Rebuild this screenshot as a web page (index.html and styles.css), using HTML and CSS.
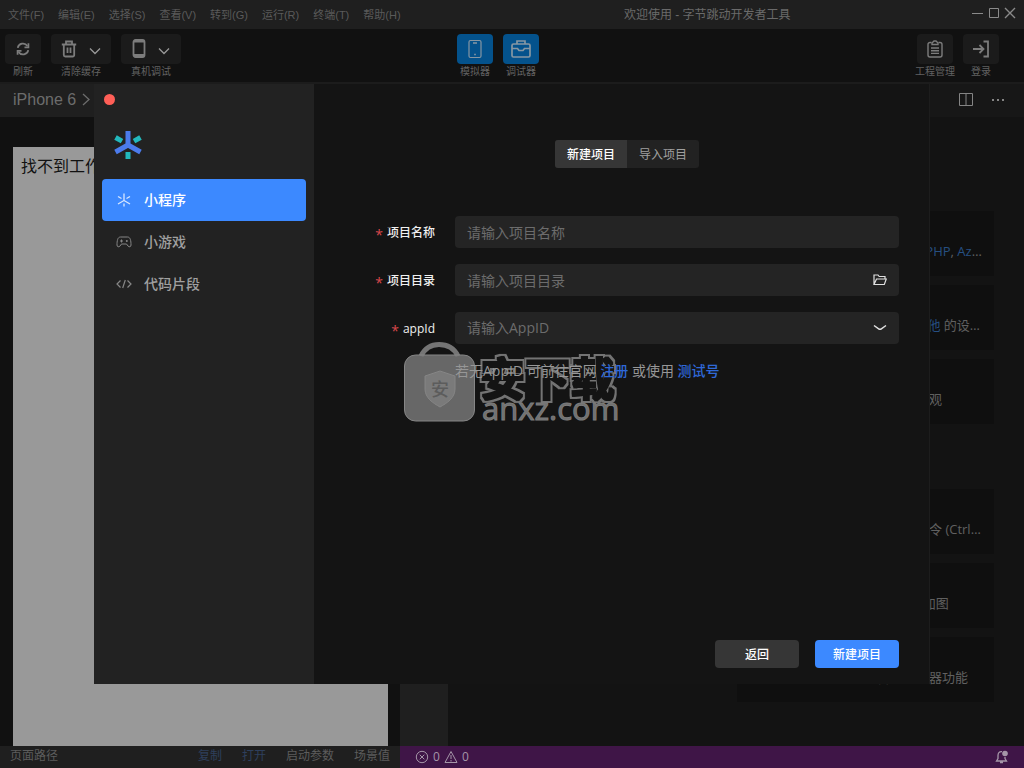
FILE: index.html
```html
<!DOCTYPE html>
<html lang="zh-CN">
<head>
<meta charset="utf-8">
<title>欢迎使用 - 字节跳动开发者工具</title>
<link rel="stylesheet" href="styles.css">
</head>
<body>
<div class="app">
  <header class="menubar">
    <nav class="menus">
      <button>文件(F)</button><button>编辑(E)</button><button>选择(S)</button><button>查看(V)</button><button>转到(G)</button><button>运行(R)</button><button>终端(T)</button><button>帮助(H)</button>
    </nav>
    <div class="window-title">欢迎使用 - 字节跳动开发者工具</div>
    <div class="window-controls">
      <button aria-label="最小化"><svg width="12" height="12" viewBox="0 0 12 12"><path d="M0 6.5h11"/></svg></button>
      <button aria-label="最大化"><svg width="12" height="12" viewBox="0 0 12 12"><path d="M1.5 1.5h9v9h-9z"/></svg></button>
      <button aria-label="关闭"><svg width="12" height="12" viewBox="0 0 12 12"><path d="M1 1l10 10M11 1L1 11" stroke-width="1.4"/></svg></button>
    </div>
  </header>

  <div class="toolbar">
    <div class="tools">
      <button class="tool"><span class="tool-face"><svg width="14" height="14" viewBox="0 0 16 16" stroke-width="2"><path d="M2 6.8A6 6 0 0 1 13 4.6M14 9.2A6 6 0 0 1 3 11.4"/><path d="M14.2 1.500v4.500h-4.500M1.800 14.500V10h4.500"/></svg></span><span class="tool-label">刷新</span></button>
      <button class="tool wide"><span class="tool-face"><svg width="16" height="18" viewBox="0 0 16 18" stroke-width="1.8"><path d="M.8 4.5h14.400M5 4V1.500h6V4M2.800 4.500V15a1.500 1.500 0 0 0 1.500 1.500h7.400a1.500 1.500 0 0 0 1.500-1.500V4.500M6.500 7.500v5.500M9.500 7.500v5.500"/></svg><svg width="12" height="8" viewBox="0 0 12 8" class="caret"><path d="M1 1.500l5 5 5-5"/></svg></span><span class="tool-label">清除缓存</span></button>
      <button class="tool wide"><span class="tool-face"><svg width="14" height="20" viewBox="0 0 14 20" stroke-width="1.8"><rect x="1.500" y="1" width="11" height="17" rx="2"/><path d="M2 2.500h10M2 16h10" stroke-width="2"/></svg><svg width="12" height="8" viewBox="0 0 12 8" class="caret"><path d="M1 1.500l5 5 5-5"/></svg></span><span class="tool-label">真机调试</span></button>
    </div>
    <div class="tools tools-center">
      <button class="tool active"><span class="tool-face"><svg width="14" height="20" viewBox="0 0 14 20" stroke-width="1.2"><rect x="1" y="1.5" width="12" height="17" rx="1.5"/><path d="M5 4h4M6.2 15.5h1.6" stroke-width="1.5"/></svg></span><span class="tool-label">模拟器</span></button>
      <button class="tool active"><span class="tool-face"><svg width="20" height="20" viewBox="0 0 20 20" stroke-width="1.7"><rect x="1" y="5" width="18" height="13" rx="1.5"/><path d="M6 5V2h8v3M1 9.500h5.500L8 11.500h4l1.500-2H19"/></svg></span><span class="tool-label">调试器</span></button>
    </div>
    <div class="tools tools-right">
      <button class="tool"><span class="tool-face"><svg width="16" height="18" viewBox="0 0 16 18" stroke-width="1.4"><path d="M4.5 2.5H3a2 2 0 0 0-2 2V15a2 2 0 0 0 2 2h10a2 2 0 0 0 2-2V4.500a2 2 0 0 0-2-2h-1.500"/><path d="M5 4.500V3l2-2h2l2 2v1.500zM4 8h8M4 10.700h8M4 13.400h8"/></svg></span><span class="tool-label">工程管理</span></button>
      <button class="tool"><span class="tool-face"><svg width="18" height="18" viewBox="0 0 18 18" stroke-width="1.8"><path d="M1 9h10M7.500 5l4 4-4 4M11.500 1.500H16v15h-4.500"/></svg></span><span class="tool-label">登录</span></button>
    </div>
  </div>

  <div class="workspace">
    <section class="simulator">
      <button class="device">iPhone 6 <svg width="8" height="13" viewBox="0 0 8 13"><path d="M1 1l6 5.500-6 5.500" stroke-width="1.300"/></svg></button>
      <div class="screen">找不到工作区</div>
      <footer class="path-bar">
        <span>页面路径</span>
        <a href="#" class="first">复制</a><a href="#">打开</a><span>启动参数</span><span>场景值</span>
      </footer>
    </section>
    <section class="ide">
      <div class="ide-main">
        <aside class="activity"></aside>
        <div class="editor">
          <div class="editor-tabs">
            <button aria-label="拆分编辑器"><svg width="14" height="14" viewBox="0 0 14 14"><path d="M.5.5h13v12h-13zM7 .5v12"/></svg></button>
            <button aria-label="更多"><svg width="14" height="4" viewBox="0 0 14 4"><path d="M1 2h2M6 2h2M11 2h2" stroke-width="2"/></svg></button>
          </div>
          <div class="welcome">
            <div class="cards">
              <div class="card"><p>安装对 <a href="#">JavaScript</a>, <a href="#">TypeScript</a>, <a href="#">PHP</a>, <a href="#">Azure</a> 的支持</p></div>
              <div class="card"><p>安装 <a href="#">Vim</a>, <a href="#">Sublime</a>, <a href="#">Atom</a> 和 <a href="#">其他</a> 的设置和快捷键</p></div>
              <div class="card"><p>使编辑器和代码呈现你喜欢的外观</p></div>
            </div>
            <div class="cards">
              <div class="card"><p>使用命令面板快速访问和搜索命令 (Ctrl+Shift+P)</p></div>
              <div class="card"><p>查看突出显示主要 UI 组件的叠加图</p></div>
              <div class="card"><p>在简短的概述中了解必备的编辑器功能</p></div>
            </div>
          </div>
        </div>
      </div>
      <footer class="status">
        <svg width="14" height="14" viewBox="0 0 14 14"><circle cx="7" cy="7" r="5.700"/><path d="M4.700 4.700l4.600 4.600M9.300 4.700L4.700 9.300"/></svg><span>0</span>
        <svg width="14" height="14" viewBox="0 0 14 14"><path d="M7 1.500L13 12.500H1zM7 5v4M7 10v1.500"/></svg><span>0</span>
        <svg class="bell" width="14" height="14" viewBox="0 0 14 14"><path d="M7 1.700C4 1.500 3 3 3 5.500v3L1.500 11h10L10 8.500V7M5 12.500h3" stroke-width="1.300"/><circle cx="10" cy="3.500" r="2.800" class="solid"/></svg>
      </footer>
    </section>
  </div>
</div>

<div class="backdrop">
  <div class="dialog" role="dialog" aria-label="新建项目">
    <aside class="sidebar">
      <button class="close" aria-label="关闭"></button>
      <svg class="logo" width="28" height="30" viewBox="0 0 28 30"><path d="M14 1v14M14 15L1.500 22M14 15l12.500 7" stroke="#4b7bec"/><path d="M1.500 7.500L8 11.200M26.500 7.500L20 11.200M14 22v7" stroke="#22b8bd"/></svg>
      <nav class="kinds">
        <button class="kind selected"><svg width="16" height="16" viewBox="0 0 16 16"><path d="M8 1.500v7L2 12M8 8.500l6 3.500M2 4.500l3.500 2M14 4.500l-3.500 2M8 11.500v3" stroke-width="1.300"/></svg>小程序</button>
        <button class="kind"><svg width="16" height="16" viewBox="0 0 16 16"><path d="M4.500 3h7C14.500 3 15 7 15 11c0 2.200-2 2.200-3 1l-1.500-2h-5L4 12c-1 1.200-3 1.200-3-1 0-4 .5-8 3.500-8z"/><path d="M4 7h3M5.500 5.500v3"/><circle cx="10.800" cy="7" r="1" class="solid"/></svg>小游戏</button>
        <button class="kind"><svg width="16" height="16" viewBox="0 0 16 16"><path d="M4.500 4.500L1 8l3.500 3.500M11.500 4.500L15 8l-3.500 3.500M9.300 4L6.700 12" stroke-width="1.200"/></svg>代码片段</button>
      </nav>
    </aside>
    <form class="panel">
      <div class="switch">
        <button type="button" class="on">新建项目</button><button type="button">导入项目</button>
      </div>
      <div class="fields">
        <label for="name"><i>*</i>项目名称</label>
        <div class="field"><input id="name" type="text" placeholder="请输入项目名称"></div>
        <label for="dir"><i>*</i>项目目录</label>
        <div class="field"><input id="dir" type="text" placeholder="请输入项目目录"><button type="button" class="suffix" aria-label="选择目录"><svg width="14" height="12" viewBox="0 0 14 12"><path d="M1 10.500V1h4l1.200 1.500H12V5M1 10.500L3.500 5H13.300l-2 5.500z" stroke-width="1.200"/></svg></button></div>
        <label for="appid"><i>*</i>appId</label>
        <div class="field"><select id="appid"><option>请输入AppID</option></select><svg class="suffix" width="14" height="8" viewBox="0 0 14 8"><path d="M1 1.500l5 3.500q1 .6 2 0l5-3.500" stroke-width="1.500"/></svg></div>
        <p class="hint">若无AppID 可前往官网 <a href="#">注册</a> 或使用 <a href="#">测试号</a></p>
      </div>
      <div class="actions">
        <button type="button">返回</button><button type="submit" class="primary">新建项目</button>
      </div>
    </form>
    <svg class="watermark" width="220" height="84" viewBox="0 0 220 84">
      <defs>
        <filter id="contour" x="-10%" y="-10%" width="120%" height="120%">
          <feMorphology in="SourceGraphic" operator="dilate" radius="3" result="outer"/>
          <feMorphology in="SourceGraphic" operator="dilate" radius="1" result="inner"/>
          <feComposite in="outer" in2="inner" operator="out"/>
        </filter>
      </defs>
      <path class="handle" d="M17 14C22 4 29 2.500 35 2.500s14 1.500 19 11.500"/>
      <rect class="bag" x="0.500" y="13" width="70" height="66" rx="11"/>
      <path class="shield" d="M36 29l15 5v13c0 9-8 14-15 18-7-4-15-9-15-18V34z"/>
      <text class="mark-badge" x="36" y="54">安</text>
      <text class="mark-cn" x="76" y="54" filter="url(#contour)">安下载</text>
      <text class="mark-en" x="78" y="78">anxz.com</text>
    </svg>
  </div>
</div>
</body>
</html>
```
FILE: styles.css
```css
* { box-sizing: border-box; }
body {
  margin: 0;
  background: #121212;
  color: #606060;
  font: 12px/16px "Open Sans", "Noto Sans CJK SC", sans-serif;
}
button, input, select { font: inherit; color: inherit; border: 0; padding: 0; background: none; }
a { text-decoration: none; }
p { margin: 0; }
svg { fill: none; stroke: currentColor; flex: none; }
.solid { fill: currentColor; stroke: none; }

.app { height: 100vh; display: flex; flex-direction: column; overflow: hidden; }

.menubar { height: 29px; flex: none; display: flex; align-items: center; padding: 0 8px; background: #1f1f1f; }
.menus { display: flex; gap: 14px; font: 11px/16px "Liberation Sans", "Noto Sans CJK SC", sans-serif; color: #5a5a5a; }
.menus button { white-space: nowrap; }
.window-title { flex: 1; padding-left: 42px; text-align: center; color: #6a6a6a; white-space: nowrap; font-family: "Liberation Sans", "Noto Sans CJK SC", sans-serif; }
.window-controls { display: flex; gap: 4px; color: #8a8a8a; padding-bottom: 4px; }
.window-controls svg { display: block; }

.toolbar { height: 53px; flex: none; display: grid; grid-template-columns: 1fr auto 1fr; padding: 5px 25px 0 5px; background: #111; }
.tools { display: flex; gap: 10px; }
.tools-center { margin-right: 8px; }
.tools-right { justify-content: flex-end; }
.tool { width: 36px; display: flex; flex-direction: column; align-items: center; justify-content: flex-start; color: #7c7c7c; }
.tool.wide { width: 60px; }
.tool-face { width: 100%; height: 30px; display: flex; align-items: center; justify-content: center; gap: 12px; border-radius: 4px; background: #1b1b1b; }
.tool .caret { color: #999; stroke-width: 1.3; margin-top: 4px; }
.tool.active .tool-face { background: #04528c; color: #8797a3; }
.tool-label { font-size: 10px; line-height: 14px; white-space: nowrap; color: #626262; }

.workspace { flex: 1; min-height: 0; display: flex; border-top: 2px solid #1c1c1c; }
.simulator { width: 400px; display: flex; flex-direction: column; background: #111; }
.device { height: 33px; flex: none; display: flex; align-items: center; gap: 6px; padding: 0 13px 2px; background: #1f1f1f; color: #6c6c6c; font: 16px/20px "Liberation Sans", sans-serif; }
.screen { flex: 1; margin: 30px 12px 0 13px; padding: 8px; background: #999; color: #111; font-size: 16px; line-height: 22px; }
.path-bar { height: 22px; flex: none; display: flex; gap: 20px; padding: 2px 10px; background: #1f1f1f; color: #5c5c5c; white-space: nowrap; }
.path-bar a { color: #2e3f5c; }
.path-bar .first { margin-left: auto; }

.ide { flex: 1; min-width: 0; display: flex; flex-direction: column; }
.ide-main { flex: 1; min-height: 0; display: flex; }
.activity { width: 48px; background: #1f1f1f; }
.editor { flex: 1; min-width: 0; background: #131313; }
.editor-tabs { height: 33px; display: flex; align-items: center; justify-content: flex-end; gap: 18px; padding: 0 19px 2px 0; background: #171717; color: #858585; }
.editor-tabs svg { display: block; }
.welcome { display: flex; flex-direction: column; align-items: flex-end; gap: 65px; padding: 94px 30px 0; }
.cards { width: 257px; display: grid; grid-template-columns: minmax(0, 1fr); gap: 9px; }
.card { height: 65px; display: flex; align-items: flex-end; padding: 0 10px 16px; background: #0f0f0f; font-size: 13px; line-height: 18px; }
.card p { flex: 1; min-width: 0; overflow: hidden; text-overflow: ellipsis; white-space: nowrap; }
.card a { color: #264f82; }
.status { height: 22px; flex: none; display: flex; align-items: center; gap: 4px; padding: 0 15px; background: #3f1547; color: #a596a8; }
.bell { margin-left: auto; }

.backdrop { position: absolute; inset: 0; display: flex; align-items: center; justify-content: center; }
.dialog { position: relative; width: 836px; height: 600px; display: flex; background: #141414; border-right: 1px solid #1d1d1d; }
.sidebar { width: 220px; display: flex; flex-direction: column; align-items: flex-start; padding: 10px 8px; background: #222; }
.close { width: 11px; height: 11px; margin-left: 2px; border-radius: 50%; background: #ff5f57; }
.logo { margin: 25px 12px 19px; stroke-width: 5; }
.kinds { width: 100%; display: flex; flex-direction: column; }
.kind { height: 42px; display: flex; align-items: center; gap: 12px; padding: 0 14px; border-radius: 4px; font-size: 14px; font-weight: 500; color: #a0a0a0; }
.kind svg { opacity: .8; }
.kind.selected { background: #3c89ff; color: #fff; }

.panel { flex: 1; min-width: 0; display: flex; flex-direction: column; padding: 56px 30px 16px 41px; }
.switch { align-self: center; display: flex; border-radius: 3px; overflow: hidden; background: #222; color: #a0a0a0; }
.switch button { width: 72px; height: 28px; padding-top: 2px; }
.switch .on { background: #363636; color: #fff; font-weight: 500; }
.fields { display: grid; grid-template-columns: 80px 1fr; gap: 16px 20px; margin-top: 48px; align-items: center; }
.fields label { padding-top: 2px; text-align: right; color: #f0f0f0; font-weight: 500; white-space: nowrap; }
.fields i { margin-right: 4px; color: #d9474b; font-style: normal; font-size: 14px; vertical-align: -3px; line-height: 14px; }
.field { height: 32px; display: flex; align-items: center; border-radius: 4px; background: #242424; padding: 0 12px; color: #e0e0e0; }
.field input, .field select { flex: 1; min-width: 0; height: 32px; font-size: 14px; color: #757575; appearance: none; outline: 0; }
.field ::placeholder { color: #6c6c6c; opacity: 1; }
.field select { color: #6c6c6c; }
.suffix svg { display: block; }
.hint { z-index: 1; grid-column: 2; font-size: 14px; line-height: 22px; color: #979797; }
.hint a { color: #2f68d8; font-weight: 500; }
.actions { display: flex; justify-content: flex-end; gap: 16px; margin-top: auto; }
.actions button { width: 84px; height: 28px; border-radius: 4px; background: #363636; color: #fff; font-weight: 500; padding-top: 2px; }
.actions .primary { background: #3c89ff; }

.watermark { position: absolute; left: 310px; top: 258px; stroke: none; pointer-events: none; }
.handle { stroke: #757575; stroke-width: 5; }
.bag { fill: #757575; fill-opacity: .85; stroke: #868686; }
.shield { fill: #7a7a7a; stroke: #858585; }
.mark-badge { fill: #5c5c5c; font-size: 18px; font-weight: 500; text-anchor: middle; }
.mark-cn { fill: #737373; font-size: 45px; font-weight: 700; }
.mark-en { fill: #707070; stroke: #7c7c7c; font-size: 31px; font-weight: 400; }
```
